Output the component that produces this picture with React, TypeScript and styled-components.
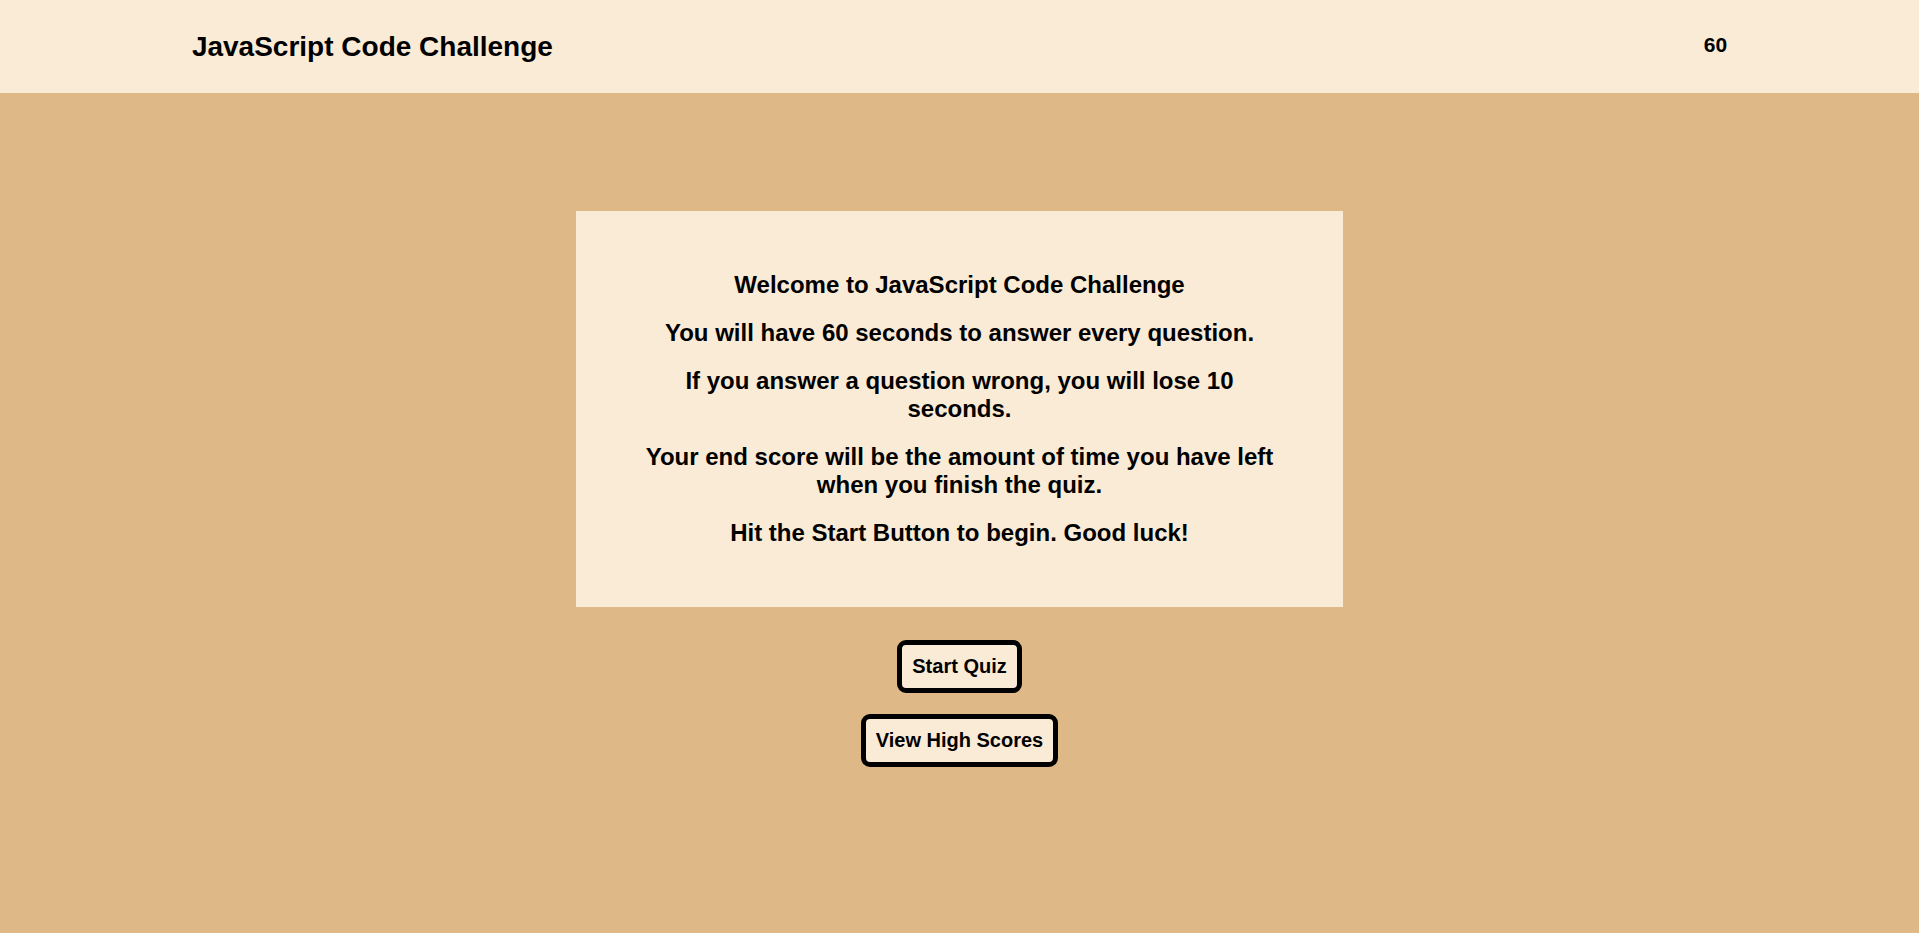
import React from "react";
import styled, { createGlobalStyle } from "styled-components";

const GlobalStyle = createGlobalStyle`
  html, body {
    margin: 0;
    padding: 0;
  }
  body {
    background: #deb887;
    font-family: "Liberation Sans", Arial, sans-serif;
    color: #000;
    min-height: 100vh;
  }
`;

const Header = styled.header`
  height: 93px;
  background: #faebd7;
  display: flex;
  align-items: center;
  justify-content: space-between;
  padding: 0 10%;
`;

const Title = styled.h1`
  margin: 0;
  font-size: 28px;
  font-weight: bold;
`;

const Timer = styled.div`
  font-size: 21px;
  font-weight: bold;
  margin-top: -4px;
`;

const Main = styled.main`
  display: flex;
  flex-direction: column;
  align-items: center;
  padding-top: 118px;
`;

const Card = styled.section`
  width: 40%;
  box-sizing: border-box;
  background: #faebd7;
  padding: 40px 64px;
  text-align: center;
`;

const Line = styled.p`
  margin: 20px 0;
  font-size: 24px;
  font-weight: bold;
`;

const Buttons = styled.div`
  display: flex;
  flex-direction: column;
  align-items: center;
  gap: 21px;
  margin-top: 33px;
`;

const Button = styled.button`
  font-family: "Liberation Sans", Arial, sans-serif;
  font-size: 20px;
  font-weight: bold;
  line-height: 23px;
  color: #000;
  background: #faebd7;
  border: 5px solid #000;
  border-radius: 9px;
  padding: 10px;
  cursor: pointer;
`;

const lines = [
  "Welcome to JavaScript Code Challenge",
  "You will have 60 seconds to answer every question.",
  "If you answer a question wrong, you will lose 10 seconds.",
  "Your end score will be the amount of time you have left when you finish the quiz.",
  "Hit the Start Button to begin. Good luck!",
];

export default function App() {
  return (
    <>
      <GlobalStyle />
      <Header>
        <Title>JavaScript Code Challenge</Title>
        <Timer>60</Timer>
      </Header>
      <Main>
        <Card>
          {lines.map((l) => (
            <Line key={l}>{l}</Line>
          ))}
        </Card>
        <Buttons>
          <Button>Start Quiz</Button>
          <Button>View High Scores</Button>
        </Buttons>
      </Main>
    </>
  );
}
